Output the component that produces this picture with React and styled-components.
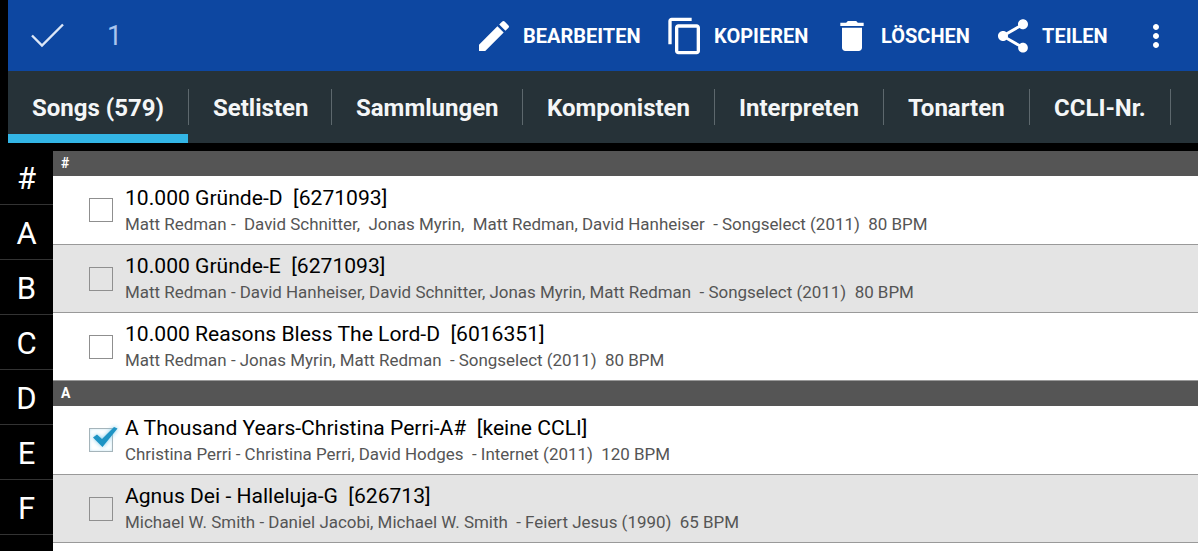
import React from 'react';
import styled, { createGlobalStyle } from 'styled-components';
import { MdEdit, MdContentCopy, MdDelete, MdShare, MdMoreVert } from 'react-icons/md';

const GlobalStyle = createGlobalStyle`
  html, body {
    margin: 0;
    padding: 0;
    height: 100%;
    overflow: hidden;
    background: #000;
    font-family: Roboto, "Liberation Sans", sans-serif;
  }
`;

const actions = [
  { label: 'BEARBEITEN', icon: <MdEdit />, width: 191 },
  { label: 'KOPIEREN', icon: <MdContentCopy />, width: 167 },
  { label: 'LÖSCHEN', icon: <MdDelete />, width: 161 },
  { label: 'TEILEN', icon: <MdShare />, width: 145 },
];

const tabs = [
  { label: 'Songs (579)', width: 181, active: true },
  { label: 'Setlisten', width: 143 },
  { label: 'Sammlungen', width: 191 },
  { label: 'Komponisten', width: 192 },
  { label: 'Interpreten', width: 169 },
  { label: 'Tonarten', width: 146 },
  { label: 'CCLI-Nr.', width: 141 },
];

const letters = ['#', 'A', 'B', 'C', 'D', 'E', 'F'];

const list = [
  { header: '#' },
  {
    title: '10.000 Gründe-D  [6271093]',
    sub: 'Matt Redman -  David Schnitter,  Jonas Myrin,  Matt Redman, David Hanheiser  - Songselect (2011)  80 BPM',
  },
  {
    title: '10.000 Gründe-E  [6271093]',
    sub: 'Matt Redman - David Hanheiser, David Schnitter, Jonas Myrin, Matt Redman  - Songselect (2011)  80 BPM',
    shaded: true,
  },
  {
    title: '10.000 Reasons Bless The Lord-D  [6016351]',
    sub: 'Matt Redman - Jonas Myrin, Matt Redman  - Songselect (2011)  80 BPM',
  },
  { header: 'A' },
  {
    title: 'A Thousand Years-Christina Perri-A#  [keine CCLI]',
    sub: 'Christina Perri - Christina Perri, David Hodges  - Internet (2011)  120 BPM',
    checked: true,
  },
  {
    title: 'Agnus Dei - Halleluja-G  [626713]',
    sub: 'Michael W. Smith - Daniel Jacobi, Michael W. Smith  - Feiert Jesus (1990)  65 BPM',
    shaded: true,
  },
];

const App = () => (
  <Page>
    <GlobalStyle />
    <ActionBar>
      <Selection>
        <svg width="36" height="28" viewBox="0 0 36 28" fill="none">
          <path d="M2 13.5 L12 23.5 L33 2.5" stroke="#dce7f7" strokeWidth="2.4" />
        </svg>
        <Count>1</Count>
      </Selection>
      <Actions>
        {actions.map((a) => (
          <ActionButton key={a.label} $width={a.width}>
            {a.icon}
            <span>{a.label}</span>
          </ActionButton>
        ))}
        <MoreButton><MdMoreVert /></MoreButton>
      </Actions>
    </ActionBar>
    <TabBar>
      {tabs.map((t) => (
        <Tab key={t.label} $width={t.width} $active={t.active}>
          <span>{t.label}</span>
        </Tab>
      ))}
    </TabBar>
    <Content>
      <IndexColumn>
        {letters.map((l) => <IndexItem key={l}>{l}</IndexItem>)}
      </IndexColumn>
      <SongList>
        {list.map((item) => (item.header ? (
          <SectionHeader key={item.header}>{item.header}</SectionHeader>
        ) : (
          <Row key={item.title} $shaded={item.shaded}>
            <CheckBox $checked={item.checked}>
              {item.checked && (
                <svg width="26" height="22" viewBox="0 0 26 22">
                  <path d="M1 11.5 L5 8.5 L10 13 L22 1 L25.5 2.5 L10.5 21 Z" fill="#1f94c4" />
                </svg>
              )}
            </CheckBox>
            <RowText>
              <Title>{item.title}</Title>
              <Sub>{item.sub}</Sub>
            </RowText>
          </Row>
        )))}
        <Row />
      </SongList>
    </Content>
  </Page>
);

const Page = styled.div`
  width: 1198px;
  height: 551px;
  overflow: hidden;
  background: #000;
  display: flex;
  flex-direction: column;
`;

const ActionBar = styled.div`
  height: 71px;
  margin-left: 8px;
  background: #0d47a1;
  display: flex;
  align-items: center;
  justify-content: space-between;
  flex-shrink: 0;
`;

const Selection = styled.div`
  display: flex;
  align-items: center;
  padding-left: 22px;
  gap: 41px;
`;

const Count = styled.span`
  color: #a9c4ee;
  font-size: 27px;
`;

const Actions = styled.div`
  display: flex;
  align-items: center;
  padding-right: 24px;
`;

const ActionButton = styled.div`
  width: ${(p) => p.$width}px;
  display: flex;
  align-items: center;
  gap: 9px;
  color: #fff;
  font-size: 20px;
  font-weight: 700;
  white-space: nowrap;
  svg {
    font-size: 40px;
    flex-shrink: 0;
  }
`;

const MoreButton = styled.div`
  display: flex;
  color: #fff;
  font-size: 36px;
`;

const TabBar = styled.div`
  height: 72px;
  margin-left: 8px;
  background: #263238;
  display: flex;
  flex-shrink: 0;
`;

const Tab = styled.div`
  position: relative;
  width: ${(p) => p.$width}px;
  height: 63px;
  flex-shrink: 0;
  box-sizing: border-box;
  padding-left: 24px;
  padding-top: 10px;
  display: flex;
  align-items: center;
  color: #f4f6f7;
  font-size: 24px;
  font-weight: 700;
  white-space: nowrap;
  &::after {
    content: '';
    position: absolute;
    right: 0;
    top: 18px;
    height: 36px;
    width: 1px;
    background: #5d686d;
  }
  &::before {
    content: '';
    display: ${(p) => (p.$active ? 'block' : 'none')};
    position: absolute;
    left: 0;
    right: 1px;
    bottom: -9px;
    height: 9px;
    background: #33b5e5;
  }
`;

const Content = styled.div`
  display: flex;
  flex: 1;
  min-height: 0;
  padding-top: 8px;
`;

const IndexColumn = styled.div`
  width: 53px;
  flex-shrink: 0;
`;

const IndexItem = styled.div`
  height: 55px;
  box-sizing: border-box;
  border-bottom: 1px solid #333;
  display: flex;
  align-items: center;
  justify-content: center;
  padding-top: 3px;
  color: #fff;
  font-size: 31px;
  &:first-child {
    height: 54px;
    padding-top: 1px;
  }
`;

const SongList = styled.div`
  flex: 1;
  min-width: 0;
  display: flex;
  flex-direction: column;
`;

const SectionHeader = styled.div`
  height: 25px;
  background: #555;
  color: #fff;
  font-size: 14px;
  font-weight: 700;
  padding-left: 8px;
  line-height: 25px;
  flex-shrink: 0;
`;

const Row = styled.div`
  height: 68px;
  flex-shrink: 0;
  box-sizing: border-box;
  border-bottom: 1px solid #999;
  background: ${(p) => (p.$shaded ? '#e4e4e4' : '#fff')};
  display: flex;
  align-items: center;
  padding-left: 36px;
  gap: 12px;
  ${SectionHeader} + & {
    height: 69px;
  }
`;

const CheckBox = styled.div`
  position: relative;
  width: 24px;
  height: 24px;
  box-sizing: border-box;
  border: 1.5px solid #8f8f8f;
  flex-shrink: 0;
  ${(p) => p.$checked && 'box-shadow: inset 0 0 3px #c4e4f2; border-color: #a5b4ba;'}
  svg {
    position: absolute;
    left: 2px;
    top: -3px;
    filter: drop-shadow(0 0 2px #7cc8e8);
  }
`;

const RowText = styled.div`
  display: flex;
  flex-direction: column;
  gap: 5px;
  margin-top: -1px;
`;

const Title = styled.div`
  color: #000;
  font-size: 21.1px;
  line-height: 24px;
  white-space: pre;
`;

const Sub = styled.div`
  color: #555;
  font-size: 16.95px;
  line-height: 19px;
  white-space: pre;
`;

export default App;
